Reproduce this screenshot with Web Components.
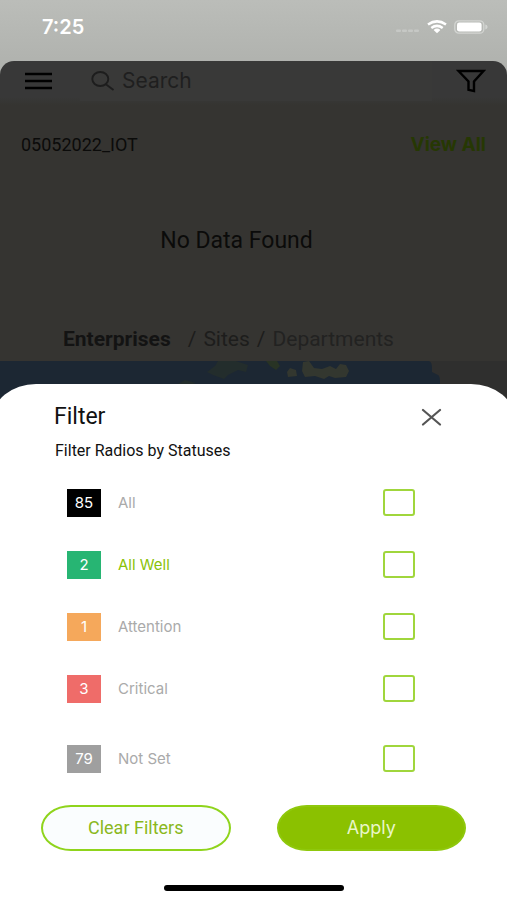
<!DOCTYPE html>
<html lang="en">
<head>
<meta charset="utf-8">
<meta name="viewport" content="width=device-width, initial-scale=1">
<title>Filter</title>
<style>
html, body { margin: 0; }
body { font-family: Roboto, "Liberation Sans", sans-serif; background: #fff; }
</style>
</head>
<body>
<app-screen>
  <status-bar slot="status" time="7:25"></status-bar>
  <dashboard-page slot="page"></dashboard-page>
  <filter-sheet slot="sheet">
    <status-row count="85" name="All" style="--chip:#000"></status-row>
    <status-row count="2" name="All Well" style="--chip:#27b573;--label:#8ac207"></status-row>
    <status-row count="1" name="Attention" style="--chip:#f5a85b"></status-row>
    <status-row count="3" name="Critical" style="--chip:#ef6c69"></status-row>
    <status-row count="79" name="Not Set" class="last" style="--chip:#9f9f9f"></status-row>
    <pill-button slot="actions">Clear Filters</pill-button>
    <pill-button slot="actions" primary>Apply</pill-button>
  </filter-sheet>
</app-screen>
<script>
const define = (name, html) => customElements.define(name, class extends HTMLElement {
  constructor() {
    super();
    this.attachShadow({ mode: "open" }).innerHTML = html(this);
  }
});

define("app-screen", () => `
<style>
:host { display: flex; flex-direction: column; min-height: 100vh; overflow: hidden;
  background: linear-gradient(#bbbdb9, #b0b2ae 64px); }
::slotted([slot=sheet]) { flex: 1; }
</style>
<slot name="status"></slot><slot name="page"></slot><slot name="sheet"></slot>`);

define("status-bar", el => `
<style>
:host { display: flex; align-items: center; justify-content: space-between; height: 53px;
  padding: 0 19px 8px 42px; color: #fff; font: 600 20px/24px Inter, sans-serif; }
.icons { display: flex; align-items: center; gap: 7px; }
svg { display: block; }
</style>
<span>${el.getAttribute("time")}</span>
<div class="icons">
  <svg width="24" height="14" viewBox="0 0 24 14" fill="#c6c8c5"><rect y="9.500" width="5" height="2.500" rx="1"/><rect x="6" y="9.500" width="5" height="2.500" rx="1"/><rect x="12" y="9.500" width="5" height="2.500" rx="1"/><rect x="18" y="9.500" width="5" height="2.500" rx="1"/></svg>
  <svg width="20" height="14" viewBox="0 0 20 14" fill="none" stroke="#fff" stroke-width="2.500"><path d="M1 4.600Q10-1.800 19 4.600M4.300 8Q10 3.800 15.700 8"/><path d="M6.600 10Q10 7.200 13.400 10L10 13.300Z" fill="#fff" stroke="none"/></svg>
  <svg width="34" height="14" viewBox="0 0 34 14"><rect x=".8" y=".8" width="29" height="12.400" rx="4" fill="none" stroke="#d3d5d2" stroke-width="1.300"/><rect x="3" y="2.500" width="24.600" height="9" rx="2.300" fill="#fff"/><path d="M31.300 4.600Q33.600 5 33.600 7T31.300 9.400Z" fill="#d3d5d2"/></svg>
</div>`);

define("dashboard-page", () => `
<style>
:host { display: block; background: linear-gradient(#383838, #383838 36px, #353431 44px);
  border-radius: 14px 14px 0 0; overflow: hidden; color: #0b0b0a; }
header { display: flex; align-items: center; height: 40px; padding: 0 21px 0 24px; }
button { display: block; padding: 0; border: 0; background: none; }
svg { display: block; }
label { display: flex; align-items: center; flex: 1; min-width: 0; gap: 7px; height: 40px;
  margin: 0 24px 0 28px; padding-left: 11px; background: #393938; }
input { flex: 1; min-width: 0; padding: 0; border: 0; outline: 0; background: none;
  font: 21px/24px Inter, sans-serif; color: #1f1f1f; }
input::placeholder { color: #1f1f1f; opacity: 1; }
.row { display: flex; justify-content: space-between; padding: 34px 21px 0 21px; line-height: 20px; }
h2 { margin: 0; font-size: 18px; font-weight: 400; }
a { color: inherit; text-decoration: none; }
.row a { font: 700 19px/20px Inter, sans-serif; color: #263803; }
.empty { margin: 74px 0 0; padding-right: 34px; text-align: center; font-size: 23px; line-height: 24px; }
nav { display: flex; gap: 7px; margin-top: 74px; padding: 0 63px 10px; font-size: 21px; line-height: 24px;
  color: #1d1d1c; white-space: nowrap; }
nav a:first-child { font-weight: 700; color: #131313; margin-right: 10px; }
nav a:last-child { color: #222221; }
.map { width: 100%; height: 38px; background: #2f2f2e; }
</style>
<header>
  <button aria-label="Menu"><svg width="28" height="18" viewBox="0 0 28 18" stroke="#000" stroke-width="2.400"><path d="M1 2H28M1 9H28M1 16H28"/></svg></button>
  <label>
    <svg width="24" height="20" viewBox="0 0 24 20" fill="none" stroke="#1d1d1d" stroke-width="1.900"><ellipse cx="9.300" cy="8" rx="8" ry="7"/><path d="M14.500 13L22.500 19"/></svg>
    <input type="text" placeholder="Search" aria-label="Search">
  </label>
  <button aria-label="Filter"><svg width="30" height="24" viewBox="0 0 30 24" fill="none" stroke="#000" stroke-width="2.400"><path d="M2.500 2H27.500L18 12.500V22L12.500 20.800V12.500Z"/></svg></button>
</header>
<div class="row"><h2>05052022_IOT</h2><a href="#all">View All</a></div>
<p class="empty">No Data Found</p>
<nav aria-label="Breadcrumb"><a href="#enterprises">Enterprises</a><span>/</span><a href="#sites">Sites</a><span>/</span><a href="#departments">Departments</a></nav>
<svg class="map" viewBox="0 0 507 38" preserveAspectRatio="xMidYMin slice">
  <path d="M0 0H429Q432 1 432 7V11L438 14Q440 15 440 21V38H0Z" fill="#1c2733"/>
  <path d="M207 11L215 5 218 0H236L248 4 246 11 238 9 228 14 224 18 213 14ZM178 23L185 19 196 22 190 24Z" fill="#232d2c"/>
  <path d="M266 0H277L280 5 276 9 270 5Z" fill="#283324"/>
  <path d="M290 7L296 9 297 15 288 16 287 11ZM303 1L309 0 314 7 322 8 330 5 336 8 340 3 346 4 349 10 346 16 335 17 329 15 324 18 315 15 305 16 302 10Z" fill="#33372f"/>
</svg>`);

define("filter-sheet", () => `
<style>
:host { display: flex; flex-direction: column; position: relative; margin: -15px -8px 0;
  padding: 0 8px; background: #fff; border-radius: 44px 44px 0 0 / 36px 36px 0 0; }
.head { display: flex; justify-content: space-between; align-items: center; padding: 20px 65px 0 54px; }
h1 { margin: 0; font-size: 23px; line-height: 26px; font-weight: 400; color: #111; }
button { display: block; padding: 0; border: 0; background: none; }
svg { display: block; }
fieldset { display: flex; flex-direction: column; gap: 34px; margin: 0; padding: 0 92px 0 67px; border: 0; min-width: 0; }
legend { margin: 0 0 28px -12px; padding: 11px 0 0; font-size: 16px; line-height: 20px; color: #111; }
::slotted(.last) { margin-top: 8px; }
.actions { display: grid; grid-template-columns: 1fr 1fr; gap: 46px; padding: 32px 41px; }
.home { width: 180px; height: 6px; margin: auto auto 9px; border-radius: 3px; background: #000; }
</style>
<div class="head"><h1>Filter</h1>
<button aria-label="Close"><svg width="21" height="18" viewBox="0 0 21 18" stroke="#555" stroke-width="2.200" stroke-linecap="round"><path d="M2 2L19 16.500M19 2L2 16.500"/></svg></button></div>
<fieldset><legend>Filter Radios by Statuses</legend><slot></slot></fieldset>
<div class="actions"><slot name="actions"></slot></div>
<div class="home"></div>`);

define("status-row", el => `
<style>
:host { display: block; }
label { display: flex; align-items: flex-start; height: 28px; font: 15px/28px Inter, sans-serif; }
.count { width: 34px; text-align: center; color: #fff; background: var(--chip); }
.name { flex: 1; padding-left: 17px; color: var(--label, #aaa); }
input { appearance: none; box-sizing: border-box; width: 32px; height: 27px; margin: 0; border: 2px solid #a0d63c; border-radius: 3px; background: #fff; }
input:checked { background: #8ac207; }
</style>
<label><span class="count">${el.getAttribute("count")}</span><span class="name">${el.getAttribute("name")}</span><input type="checkbox"></label>`);

define("pill-button", () => `
<style>
:host { display: block; }
button { display: block; width: 100%; height: 46px; padding: 0; border: 2px solid #8fd41c;
  border-radius: 30px / 23px; background: #fafdfe; color: #8ab81c; font: 18px/20px Roboto, sans-serif; }
:host([primary]) button { background: #8bc100; border-color: #8fc80c; color: #e9f6c8; font: 18px/20px Inter, sans-serif; }
</style>
<button type="button"><slot></slot></button>`);
</script>
</body>
</html>
